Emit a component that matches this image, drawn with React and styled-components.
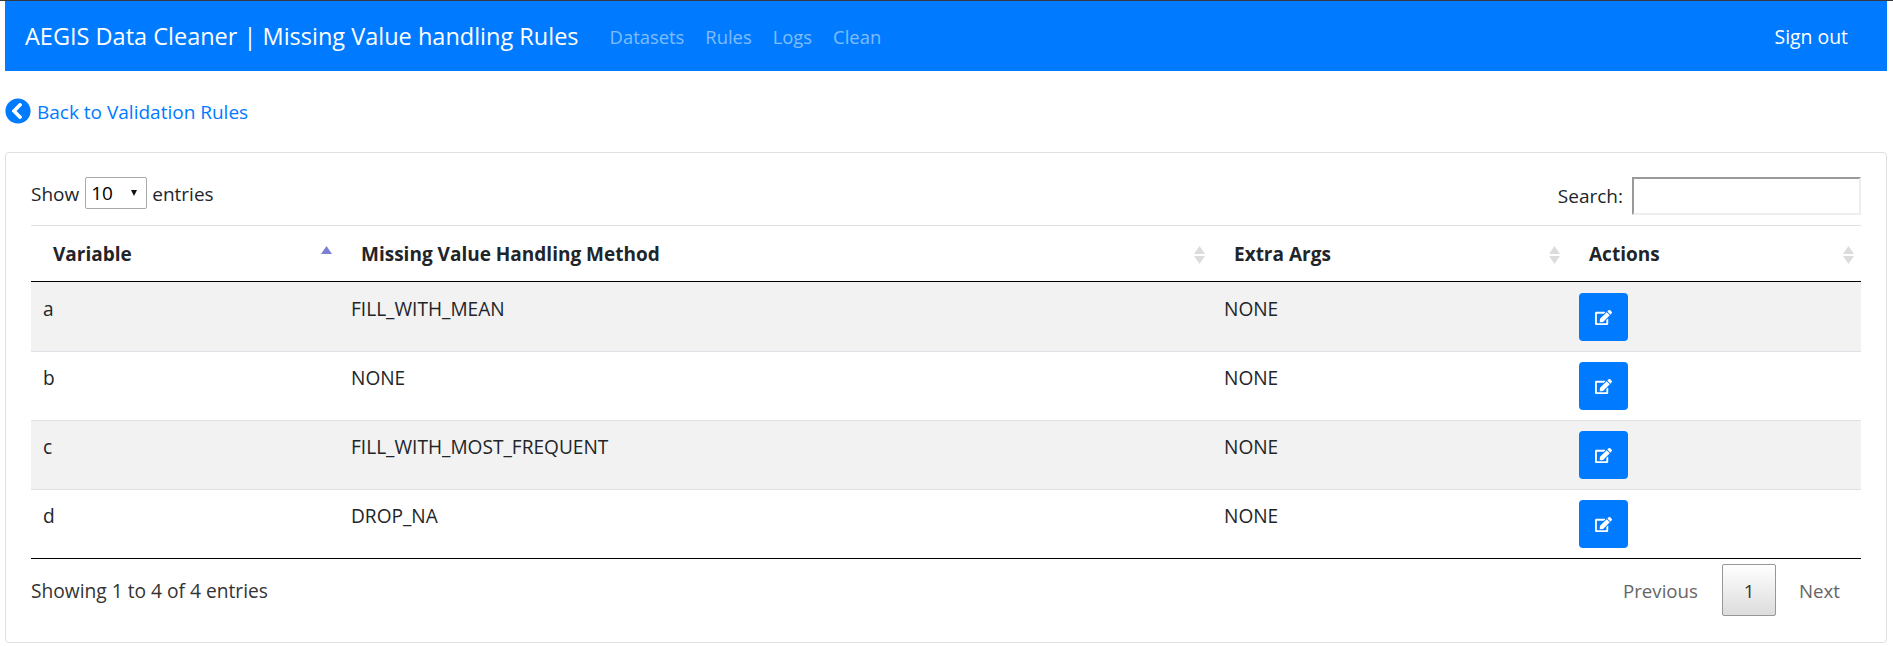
import React from 'react';
import styled, { createGlobalStyle } from 'styled-components';
import { FaChevronCircleLeft, FaEdit } from 'react-icons/fa';

const Global = createGlobalStyle`
  html, body { margin: 0; padding: 0; background: #fff; }
  body { font-family: "Open Sans", "Noto Sans", sans-serif; font-size: 19px; color: #212529; overflow: hidden; }
  * { box-sizing: border-box; }
`;
const Page = styled.div`
  border-top: 1px solid #343a40;
  padding: 0 6px 0 5px;
`;
const Navbar = styled.nav`
  height: 70px;
  background: #007bff;
  display: flex;
  align-items: center;
  padding: 0 39px 0 20px;
`;
const Brand = styled.a`
  color: #fff;
  font-size: 23.5px;
  margin-right: 31px;
`;
const NavLink = styled.a`
  color: rgba(255,255,255,.5);
  font-size: 18.4px;
  margin-right: 21px;
`;
const SignOut = styled.a`
  color: #fff;
  margin-left: auto;
  font-size: 19.4px;
`;
const BackRow = styled.a`
  display: flex;
  align-items: center;
  gap: 6px;
  height: 26px;
  margin-top: 27px;
  color: #007bff;
`;
const LoweredText = styled.span`
  padding-top: 2px;
`;
const Card = styled.section`
  margin-top: 28px;
  height: 491px;
  border: 1px solid #dfdfdf;
  border-radius: 4px;
  padding: 24px 25px 0 25px;
`;
const Toolbar = styled.div`
  height: 48px;
  display: flex;
  justify-content: space-between;
  align-items: flex-start;
`;
const Label = styled.label`
  display: flex;
  align-items: center;
  gap: 5px;
`;
const LengthSelect = styled.div`
  width: 62px;
  height: 32px;
  margin-left: 1px;
  border: 1px solid #a9a9a9;
  border-radius: 2px;
  display: flex;
  align-items: center;
  justify-content: space-between;
  padding: 0 9px 0 5px;
  color: #000;
  &::after {
    content: "";
    border-left: 3.5px solid transparent;
    border-right: 3.5px solid transparent;
    border-top: 6px solid #111;
  }
`;
const SearchInput = styled.input`
  width: 229px;
  height: 38px;
  border-width: 2px;
  border-style: solid;
  border-color: #999 #eee #eee #999;
  margin-left: 4px;
  background: #fff;
`;
const Table = styled.table`
  width: 100%;
  table-layout: fixed;
  border-collapse: collapse;
  border-top: 1px solid #dee2e6;
`;
const HeadCell = styled.th`
  position: relative;
  height: 56px;
  padding: 0 22px;
  text-align: left;
  font-weight: 700;
  color: #212529;
  border-bottom: 1px solid #000;
`;
const SortMark = styled.svg`
  position: absolute;
  right: 7px;
  top: 20px;
`;
const Row = styled.tr`
  height: 69px;
  background: ${p => (p.$odd ? '#f2f2f2' : '#fff')};
  border-bottom: 1px solid #dee2e6;
  &:first-child { height: 70px; }
  &:last-child { border-bottom-color: #000; }
`;
const Cell = styled.td`
  padding: 0 12px 16px;
  vertical-align: middle;
  line-height: 24px;
  font-size: 19.1px;
`;
const ActionCell = styled.td`
  padding: 0 12px;
  vertical-align: top;
`;
const EditButton = styled.button`
  width: 49px;
  height: 48px;
  margin-top: 10px;
  background: #007bff;
  border: 0;
  border-radius: 4px;
  color: #fff;
  display: flex;
  align-items: center;
  justify-content: center;
  padding: 0;
  tr:first-child & { margin-top: 11px; }
`;
const Footer = styled.div`
  display: flex;
  justify-content: space-between;
  align-items: flex-start;
  padding-top: 5px;
`;
const Info = styled.div`
  color: #333;
  margin-top: 13px;
  font-size: 19.2px;
`;
const Pager = styled.div`
  display: flex;
  align-items: center;
  padding-right: 21px;
  color: #666;
  font-size: 18.7px;
`;
const PageText = styled.span`
  line-height: 51px;
`;
const PageCurrent = styled.span`
  width: 54px;
  height: 52px;
  margin: 0 23px 0 24px;
  border: 1px solid #979797;
  border-radius: 2px;
  background: linear-gradient(to bottom, #fff 0%, #dcdcdc 100%);
  color: #333;
  display: flex;
  align-items: center;
  justify-content: center;
`;

const rows = [
  ['a', 'FILL_WITH_MEAN', 'NONE'],
  ['b', 'NONE', 'NONE'],
  ['c', 'FILL_WITH_MOST_FREQUENT', 'NONE'],
  ['d', 'DROP_NA', 'NONE'],
];
const Sort = ({ up }) => (
  <SortMark width="11" height="19" viewBox="0 0 11 19">
    <path d="M5.5 0 L11 8 H0 Z" fill={up ? '#7a80d4' : '#dcdcdc'} />
    {!up && <path d="M5.5 18 L11 10 H0 Z" fill="#dcdcdc" />}
  </SortMark>
);
const columns = [
  ['Variable', 308],
  ['Missing Value Handling Method', 873],
  ['Extra Args', 355],
  ['Actions', 294],
];

export default function App() {
  return (
    <Page>
      <Global />
      <Navbar>
        <Brand>AEGIS Data Cleaner | Missing Value handling Rules</Brand>
        <NavLink>Datasets</NavLink>
        <NavLink>Rules</NavLink>
        <NavLink>Logs</NavLink>
        <NavLink>Clean</NavLink>
        <SignOut>Sign out</SignOut>
      </Navbar>
      <BackRow>
        <FaChevronCircleLeft size={26} />
        <LoweredText>Back to Validation Rules</LoweredText>
      </BackRow>
      <Card>
        <Toolbar>
          <Label>
            <LoweredText>Show</LoweredText>
            <LengthSelect>10</LengthSelect>
            <LoweredText>entries</LoweredText>
          </Label>
          <Label>Search: <SearchInput /></Label>
        </Toolbar>
        <Table>
          <colgroup>
            {columns.map(([n, w]) => <col key={n} style={{ width: w }} />)}
          </colgroup>
          <thead>
            <tr>
              {columns.map(([n], i) => (
                <HeadCell key={n}>{n}<Sort up={i === 0} /></HeadCell>
              ))}
            </tr>
          </thead>
          <tbody>
            {rows.map((r, i) => (
              <Row key={r[0]} $odd={i % 2 === 0}>
                {r.map((c, j) => <Cell key={j}>{c}</Cell>)}
                <ActionCell>
                  <EditButton aria-label="Edit"><FaEdit size={17} /></EditButton>
                </ActionCell>
              </Row>
            ))}
          </tbody>
        </Table>
        <Footer>
          <Info>Showing 1 to 4 of 4 entries</Info>
          <Pager>
            <PageText>Previous</PageText>
            <PageCurrent>1</PageCurrent>
            <PageText>Next</PageText>
          </Pager>
        </Footer>
      </Card>
    </Page>
  );
}
